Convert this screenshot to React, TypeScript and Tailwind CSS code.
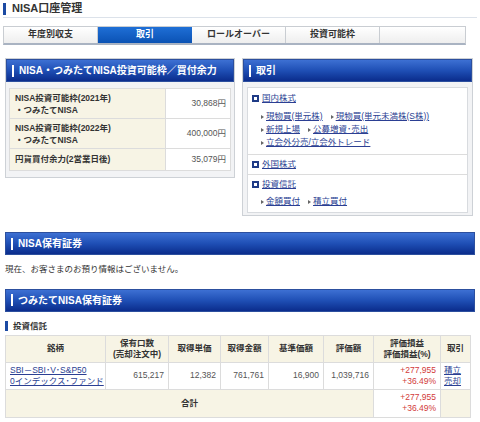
import React from 'react';

const font = "font-['Liberation_Sans','Noto_Sans_CJK_JP',sans-serif]";

function PanelHeader({ title }: { title: string }) {
  return (
    <div className="flex h-[23px] items-center gap-[5px] border border-[#2c4f9e] bg-gradient-to-b from-[#3d70d3] via-[#1f4fb5] to-[#0b2c8c] pl-[5px]">
      <span className="h-[12px] w-[2px] bg-white" />
      <span className="text-[10px] font-bold text-white">{title}</span>
    </div>
  );
}

function Arrow() {
  return <span className="mr-[2px] inline-block h-0 w-0 border-y-[2.5px] border-l-[3px] border-y-transparent border-l-[#666] align-middle" />;
}

function Link({ children }: { children: React.ReactNode }) {
  return <a className="text-[#2b3f93] underline underline-offset-1">{children}</a>;
}

function SectionTitle({ children }: { children: React.ReactNode }) {
  return (
    <div className="flex items-center gap-[3px]">
      <span className="h-[7px] w-[7px] border-[2px] border-[#1f3b86] bg-white" />
      <Link>{children}</Link>
    </div>
  );
}

const tabs = ['年度別収支', '取引', 'ロールオーバー', '投資可能枠'];

export default function App() {
  return (
    <div className={`w-[480px] h-[422px] overflow-hidden bg-white text-[#333] ${font}`}>
      {/* title */}
      <div className="mx-[3px] flex h-[18px] items-center gap-[6px] border-b border-[#dce2ea]">
        <span className="h-[12px] w-[3px] bg-[#1c4aa3]" />
        <h1 className="text-[11px] font-bold leading-none">NISA口座管理</h1>
      </div>

      {/* tabs */}
      <div className="mx-[3px] mt-[8px] flex h-[19px] w-[463px] border border-b-2 border-[#c9cdd2] border-b-[#a9b3c2] bg-gradient-to-b from-white to-[#eeeeee] text-[9px] font-bold">
        {tabs.map((t) => (
          <div
            key={t}
            className={
              t === '取引'
                ? 'flex w-[94px] items-center justify-center bg-gradient-to-b from-[#1f6fd6] to-[#0a52b4] text-white'
                : 'flex w-[94px] items-center justify-center border-r border-[#c9cdd2]'
            }
          >
            {t}
          </div>
        ))}
      </div>

      {/* panels */}
      <div className="mt-[13px] flex items-start gap-[7px] px-[5px]">
        <div className="w-[230px] border border-[#cdd1d6] bg-[#f2f3f5]">
          <PanelHeader title="NISA・つみたてNISA投資可能枠／買付余力" />
          <div className="px-[3px] pb-[6px] pt-[6px]">
            <table className="w-full table-fixed border-collapse text-[8.5px]">
              <colgroup>
                <col className="w-[156px]" />
                <col />
              </colgroup>
              <tbody>
                <tr className="h-[30px]">
                  <td className="border border-[#dcdcdc] bg-[#f7f4e5] px-[5px] font-bold leading-[12px]">
                    NISA投資可能枠(2021年)<br />・つみたてNISA
                  </td>
                  <td className="border border-[#dcdcdc] bg-white px-[4px] text-right text-[#555]">30,868円</td>
                </tr>
                <tr className="h-[30px]">
                  <td className="border border-[#dcdcdc] bg-[#f7f4e5] px-[5px] font-bold leading-[12px]">
                    NISA投資可能枠(2022年)<br />・つみたてNISA
                  </td>
                  <td className="border border-[#dcdcdc] bg-white px-[4px] text-right text-[#555]">400,000円</td>
                </tr>
                <tr className="h-[22px]">
                  <td className="border border-[#dcdcdc] bg-[#f7f4e5] px-[5px] font-bold">円貨買付余力(2営業日後)</td>
                  <td className="border border-[#dcdcdc] bg-white px-[4px] text-right text-[#555]">35,079円</td>
                </tr>
              </tbody>
            </table>
          </div>
        </div>

        <div className="w-[231px] border border-[#cdd1d6] bg-[#f2f3f5]">
          <PanelHeader title="取引" />
          <div className="px-[4px] pb-[2px] pt-[5px]">
            <div className="border border-[#d8dbdf] bg-white text-[8.5px] leading-[13px]">
              <div className="border-b border-[#dcdcdc] px-[4px] pb-[5px] pt-[4px]">
                <SectionTitle>国内株式</SectionTitle>
                <div className="mt-[5px] pl-[9px]">
                  <div><Arrow /><Link>現物買(単元株)</Link><span className="ml-[8px]" /><Arrow /><Link>現物買(単元未満株(S株))</Link></div>
                  <div><Arrow /><Link>新規上場</Link><span className="ml-[8px]" /><Arrow /><Link>公募増資･売出</Link></div>
                  <div><Arrow /><Link>立会外分売/立会外トレード</Link></div>
                </div>
              </div>
              <div className="border-b border-[#dcdcdc] px-[4px] py-[3px]">
                <SectionTitle>外国株式</SectionTitle>
              </div>
              <div className="px-[4px] pb-[4px] pt-[3px]">
                <SectionTitle>投資信託</SectionTitle>
                <div className="mt-[4px] pl-[9px]">
                  <Arrow /><Link>金額買付</Link><span className="ml-[8px]" /><Arrow /><Link>積立買付</Link>
                </div>
              </div>
            </div>
          </div>
        </div>
      </div>

      {/* NISA holdings */}
      <div className="mt-[16px] px-[5px]">
        <PanelHeader title="NISA保有証券" />
        <p className="mt-[8px] text-[8.5px]">現在、お客さまのお預り情報はございません。</p>
      </div>

      {/* tsumitate */}
      <div className="mt-[13px] px-[5px]">
        <PanelHeader title="つみたてNISA保有証券" />
        <div className="mt-[8px] flex items-center gap-[5px] text-[8.5px] font-bold">
          <span className="h-[10px] w-[3px] bg-[#1c4aa3]" />
          投資信託
        </div>
        <table className="mt-[2px] w-[465px] table-fixed border-collapse text-[8.5px] leading-[11px]">
          <colgroup>
            <col className="w-[100px]" />
            <col className="w-[63px]" />
            <col className="w-[52px]" />
            <col className="w-[48px]" />
            <col className="w-[55px]" />
            <col className="w-[50px]" />
            <col className="w-[67px]" />
            <col className="w-[30px]" />
          </colgroup>
          <thead>
            <tr className="h-[27px] bg-[#f7f4e5] font-bold">
              <th className="border border-[#dcdcdc]">銘柄</th>
              <th className="border border-[#dcdcdc]">保有口数<br />(売却注文中)</th>
              <th className="border border-[#dcdcdc]">取得単価</th>
              <th className="border border-[#dcdcdc]">取得金額</th>
              <th className="border border-[#dcdcdc]">基準価額</th>
              <th className="border border-[#dcdcdc]">評価額</th>
              <th className="border border-[#dcdcdc]">評価損益<br />評価損益(%)</th>
              <th className="border border-[#dcdcdc]">取引</th>
            </tr>
          </thead>
          <tbody className="text-[#555]">
            <tr className="h-[27px]">
              <td className="whitespace-nowrap border border-[#dcdcdc] px-[4px] text-left">
                <Link>SBI－SBI･V･S&amp;P50<br />0インデックス･ファンド</Link>
              </td>
              <td className="border border-[#dcdcdc] px-[4px] text-right">615,217</td>
              <td className="border border-[#dcdcdc] px-[4px] text-right">12,382</td>
              <td className="border border-[#dcdcdc] px-[4px] text-right">761,761</td>
              <td className="border border-[#dcdcdc] px-[4px] text-right">16,900</td>
              <td className="border border-[#dcdcdc] px-[4px] text-right">1,039,716</td>
              <td className="border border-[#dcdcdc] px-[4px] text-right text-[#d23a3a]">+277,955<br />+36.49%</td>
              <td className="border border-[#dcdcdc] px-[3px] text-left"><Link>積立</Link><br /><Link>売却</Link></td>
            </tr>
            <tr className="h-[28px]">
              <td colSpan={6} className="border border-[#dcdcdc] bg-[#f7f4e5] text-center font-bold text-[#333]">合計</td>
              <td className="border border-[#dcdcdc] px-[4px] text-right text-[#d23a3a]">+277,955<br />+36.49%</td>
              <td className="border border-[#dcdcdc] bg-[#f7f4e5]" />
            </tr>
          </tbody>
        </table>
      </div>
    </div>
  );
}
